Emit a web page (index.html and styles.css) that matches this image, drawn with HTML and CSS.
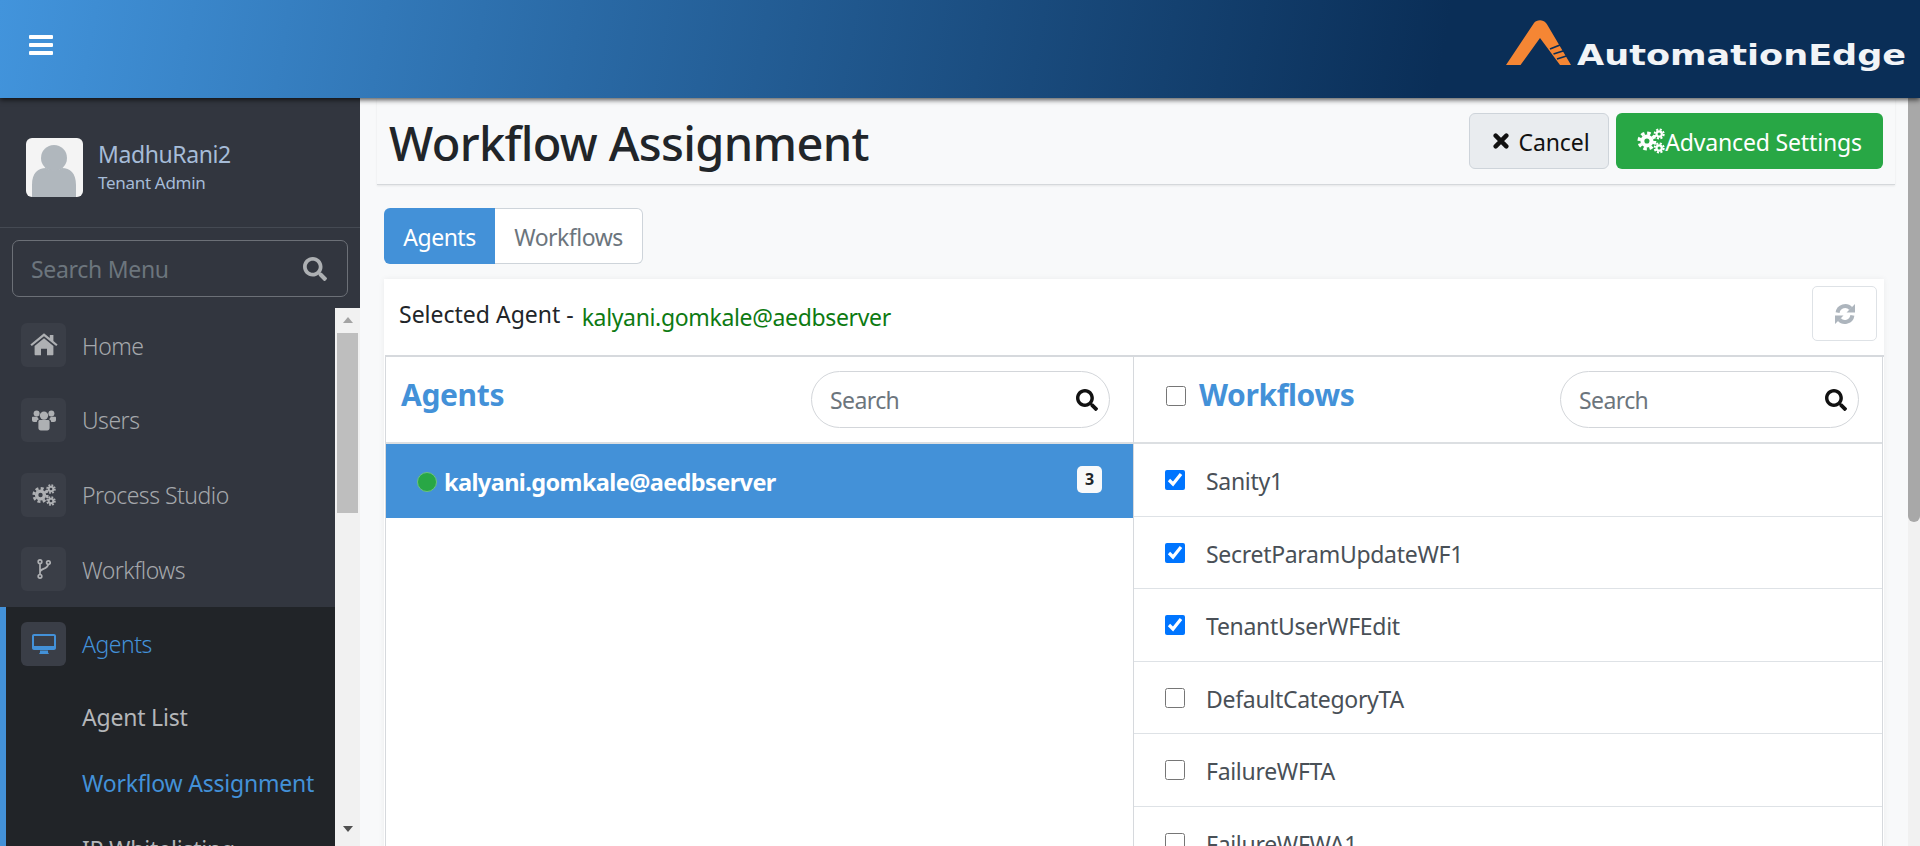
FILE: index.html
```html
<!DOCTYPE html>
<html lang="en">
<head>
  <meta charset="UTF-8">
  <title>Workflow Assignment</title>
  <link rel="stylesheet" href="styles.css">
</head>
<body>
  <svg class="defs" width="0" height="0">
    <symbol id="i-search" viewBox="0 0 512 512"><path d="M505 442.7L405.3 343c-4.5-4.5-10.6-7-17-7H372c27.6-35.3 44-79.7 44-128C416 93.1 322.9 0 208 0S0 93.1 0 208s93.1 208 208 208c48.3 0 92.7-16.4 128-44v16.3c0 6.4 2.5 12.5 7 17l99.7 99.7c9.4 9.4 24.6 9.4 33.9 0l28.3-28.3c9.4-9.4 9.4-24.6.1-34zM208 336c-70.7 0-128-57.2-128-128 0-70.7 57.2-128 128-128 70.7 0 128 57.2 128 128 0 70.7-57.2 128-128 128z"/></symbol>
    <symbol id="i-home" viewBox="0 0 28 24"><path d="M14 5.2 4.6 13v8.2c0 .6.4 1 1 1H11v-6.4h6v6.4h5.4c.6 0 1-.4 1-1V13zM27.6 11.4 23.4 8V2h-3.6v3L14 .3.4 11.4l1.4 1.7L14 3.2l12.2 9.9z"/></symbol>
    <symbol id="i-users" viewBox="0 0 24 22">
      <circle cx="12" cy="6.6" r="4.2"/><circle cx="4.6" cy="4.6" r="3"/><circle cx="19.4" cy="4.6" r="3"/>
      <path d="M6.4 12.4c0-.8.8-1.4 1.6-1.4h8c.8 0 1.6.6 1.6 1.4V19c0 1.4-1 2.4-2.4 2.4H8.800c-1.400 0-2.400-1-2.400-2.400zM0 8.800c0-.6.500-1 1-1h4.200c.4 1 1 1.800 1.700 2.400-1.300.5-2.100 1.500-2.100 2.800H2c-1.200 0-2-.8-2-2zM24 8.800c0-.6-.5-1-1-1h-4.200c-.4 1-1 1.800-1.700 2.400 1.300.5 2.100 1.500 2.100 2.800H22c1.200 0 2-.8 2-2z"/>
    </symbol>
    <symbol id="i-cogs" viewBox="0 0 24 22">
      <g fill="none" stroke="currentColor">
        <circle cx="8.500" cy="11" r="3.900" stroke-width="3.400"/>
        <circle cx="8.500" cy="11" r="6.700" stroke-width="2.800" stroke-dasharray="3 2.260"/>
        <circle cx="19" cy="5" r="2.300" stroke-width="1.900"/>
        <circle cx="19" cy="5" r="3.900" stroke-width="1.700" stroke-dasharray="1.800 1.260"/>
        <circle cx="19" cy="17" r="2.300" stroke-width="1.900"/>
        <circle cx="19" cy="17" r="3.900" stroke-width="1.700" stroke-dasharray="1.800 1.260"/>
      </g>
    </symbol>
    <symbol id="i-fork" viewBox="0 0 14 20">
      <g fill="none" stroke="currentColor" stroke-width="1.700">
        <circle cx="3" cy="2.700" r="1.800"/><circle cx="3" cy="17.300" r="1.800"/><circle cx="11.400" cy="3.600" r="1.800"/>
        <path d="M3 4.500v11M3 13c0-3.600 7.800-2.600 8.200-7.600"/>
      </g>
    </symbol>
    <symbol id="i-desktop" viewBox="0 0 24 20"><path d="M2 0h20c1.100 0 2 .9 2 2v12c0 1.100-.9 2-2 2H2c-1.100 0-2-.9-2-2V2C0 .9.900 0 2 0zm0 2v10h20V2zM8 16.500h8V18.500l1 1.500H7l1-1.500z" fill-rule="evenodd"/></symbol>
    <symbol id="i-times" viewBox="0 0 18 18"><path d="M3 3l12 12M15 3 3 15" fill="none" stroke="currentColor" stroke-width="5" stroke-linecap="round"/></symbol>
    <symbol id="i-refresh" viewBox="0 0 22 22">
      <path d="M3.600 9.600A7.600 7.600 0 0 1 16.800 5.600M18.400 12.400A7.600 7.600 0 0 1 5.200 16.400" fill="none" stroke="currentColor" stroke-width="4"/>
      <path d="M21 1v8.500h-8.500zM1 21v-8.500h8.500z"/>
    </symbol>
  </svg>

  <header class="topbar">
    <div class="menu-toggle"><span></span><span></span><span></span></div>
    <div class="logo">
      <svg class="logo-mark" width="65" height="45" viewBox="0 0 65 45">
        <path d="M0 45 28 3c2.500-3.500 9-4 12 0 .8 1 1.500 2 2 3l23 39H54L34 18 14.500 45z" fill="#f58634"/>
        <path d="M44 29l10-4M47.500 34l11-3.500M51 39l11-3.500" stroke="#0a2e57" stroke-width="1.800"/>
      </svg>
      <span class="logo-text">AutomationEdge</span>
    </div>
  </header>

  <div class="layout">
    <aside class="sidebar">
      <div class="user">
        <div class="avatar">
          <svg width="57" height="59" viewBox="0 0 57 59">
            <circle cx="28" cy="20" r="13" fill="#b0b7bd"/>
            <path d="M6 59V47c0-12 6-17 14-17 4 3 12 3 16 0 8 0 14 5 14 17v12z" fill="#b0b7bd"/>
          </svg>
        </div>
        <div>
          <div class="user-name">MadhuRani2</div>
          <div class="user-role">Tenant Admin</div>
        </div>
      </div>
      <div class="menu-search">
        <span>Search Menu</span>
        <svg class="menu-search-icon"><use href="#i-search"/></svg>
      </div>
      <div class="nav-wrap">
        <ul class="nav">
          <li class="nav-item"><span class="nav-icon"><svg width="28" height="24"><use href="#i-home"/></svg></span><span class="nav-label">Home</span></li>
          <li class="nav-item"><span class="nav-icon"><svg width="24" height="22"><use href="#i-users"/></svg></span><span class="nav-label">Users</span></li>
          <li class="nav-item"><span class="nav-icon"><svg width="24" height="22"><use href="#i-cogs"/></svg></span><span class="nav-label">Process Studio</span></li>
          <li class="nav-item"><span class="nav-icon"><svg width="14" height="20"><use href="#i-fork"/></svg></span><span class="nav-label">Workflows</span></li>
          <li class="nav-group">
            <div class="nav-item active"><span class="nav-icon"><svg width="24" height="20"><use href="#i-desktop"/></svg></span><span class="nav-label">Agents</span></div>
            <div class="sub-item">Agent List</div>
            <div class="sub-item current">Workflow Assignment</div>
            <div class="sub-item">IP Whitelisting</div>
          </li>
        </ul>
        <div class="nav-scroll">
          <span class="arrow-up"></span>
          <span class="nav-thumb"></span>
          <span class="arrow-down"></span>
        </div>
      </div>
    </aside>

    <main class="main">
      <div class="page-head">
        <h1>Workflow Assignment</h1>
        <div class="actions">
          <button class="btn btn-cancel"><svg width="16" height="16"><use href="#i-times"/></svg><span class="btn-label">Cancel</span></button>
          <button class="btn btn-green"><svg width="28" height="26"><use href="#i-cogs"/></svg><span class="btn-label">Advanced Settings</span></button>
        </div>
      </div>

      <div class="tabs">
        <div class="tab on">Agents</div>
        <div class="tab">Workflows</div>
      </div>

      <section class="card">
        <div class="card-top">
          <span class="selected">Selected Agent -</span>
          <span class="selected-name">kalyani.gomkale@aedbserver</span>
          <button class="refresh"><svg width="22" height="22"><use href="#i-refresh"/></svg></button>
        </div>
        <div class="panels">
          <div class="panel">
            <div class="panel-head">
              <h2>Agents</h2>
              <div class="pill"><span>Search</span><svg><use href="#i-search"/></svg></div>
            </div>
            <div class="agent-row">
              <span class="dot"></span>
              <span class="agent-name">kalyani.gomkale@aedbserver</span>
              <span class="badge">3</span>
            </div>
          </div>
          <div class="panel">
            <div class="panel-head">
              <input type="checkbox" class="check head-check">
              <h2>Workflows</h2>
              <div class="pill"><span>Search</span><svg><use href="#i-search"/></svg></div>
            </div>
            <div class="wf-row"><input type="checkbox" class="check" checked><span class="wf-name">Sanity1</span></div>
            <div class="wf-row"><input type="checkbox" class="check" checked><span class="wf-name">SecretParamUpdateWF1</span></div>
            <div class="wf-row"><input type="checkbox" class="check" checked><span class="wf-name">TenantUserWFEdit</span></div>
            <div class="wf-row"><input type="checkbox" class="check"><span class="wf-name">DefaultCategoryTA</span></div>
            <div class="wf-row"><input type="checkbox" class="check"><span class="wf-name">FailureWFTA</span></div>
            <div class="wf-row"><input type="checkbox" class="check"><span class="wf-name">FailureWFWA1</span></div>
          </div>
        </div>
      </section>
    </main>

    <div class="page-scroll"><span class="page-thumb"></span></div>
  </div>
</body>
</html>
```

FILE: styles.css
```css
* {
  box-sizing: border-box;
}

html, body {
  margin: 0;
  height: 846px;
  overflow: hidden;
}

body {
  font-family: "Noto Sans", "Open Sans", sans-serif;
  background-color: #f8f9fa;
  color: #212529;
  display: flex;
  flex-direction: column;
}

svg {
  fill: currentColor;
  display: block;
}

.defs {
  position: absolute;
}

/* top bar */
.topbar {
  height: 98px;
  flex: none;
  display: flex;
  align-items: center;
  justify-content: space-between;
  padding: 0 16px 0 29px;
  background: linear-gradient(100deg, #4294dc 0%, #2a6aa6 30%, #0a2e57 75%, #0a2e57 100%);
  box-shadow: 0 2px 5px rgba(0, 0, 0, 0.65);
  position: relative;
  z-index: 5;
}

.menu-toggle {
  display: flex;
  flex-direction: column;
  gap: 4px;
  margin-top: -8px;
}

.menu-toggle span {
  display: block;
  width: 24px;
  height: 4px;
  border-radius: 1px;
  background-color: white;
}

.logo {
  align-self: flex-start;
  display: flex;
  align-items: flex-start;
  gap: 6px;
  padding-top: 20px;
}

.logo-text {
  width: 327px;
  margin-top: 20px;
  font-family: "DejaVu Sans", sans-serif;
  font-size: 29px;
  font-weight: 700;
  line-height: 30px;
  white-space: nowrap;
  color: #f2f4f7;
  transform: scaleX(1.21);
  transform-origin: left;
}

.layout {
  flex: 1;
  display: flex;
  min-height: 0;
}

/* sidebar */
.sidebar {
  width: 360px;
  flex: none;
  display: flex;
  flex-direction: column;
  background-color: #32363f;
}

.user {
  height: 130px;
  flex: none;
  display: flex;
  align-items: center;
  gap: 15px;
  padding: 10px 0 0 26px;
  border-bottom: 1px solid #454a53;
}

.avatar {
  width: 57px;
  height: 59px;
  border-radius: 6px;
  overflow: hidden;
  background-color: #f4f4f4;
}

.user-name {
  font-size: 23px;
  line-height: 29px;
  letter-spacing: -0.4px;
  color: #a6bcd8;
}

.user-role {
  font-size: 17px;
  line-height: 27px;
  letter-spacing: -0.3px;
  color: #a6bcd8;
}

.menu-search {
  flex: none;
  height: 57px;
  margin: 12px 12px 11px;
  padding: 0 20px 0 18px;
  display: flex;
  align-items: center;
  justify-content: space-between;
  border: 1px solid #6c7077;
  border-radius: 7px;
  font-size: 23px;
  letter-spacing: -0.3px;
  color: #6c757d;
}

.menu-search-icon {
  width: 24px;
  height: 24px;
  color: #adb0b3;
}

.nav-wrap {
  flex: 1;
  display: flex;
  min-height: 0;
}

.nav {
  flex: 1;
  margin: 0;
  padding: 0;
  list-style: none;
  overflow: hidden;
}

.nav-item {
  height: 74.670px;
  display: flex;
  align-items: center;
  gap: 16px;
  padding-left: 21px;
  font-size: 23px;
  font-weight: 300;
  letter-spacing: -0.5px;
  color: #a5a8ac;
}

.nav-label {
  margin-top: 1px;
}

.nav-icon {
  width: 45px;
  height: 44px;
  display: flex;
  align-items: center;
  justify-content: center;
  border-radius: 6px;
  background-color: #3a3e47;
  color: #aeb0b3;
}

.nav-group {
  background-color: #212428;
  border-left: 6px solid #4391d8;
  padding-bottom: 20px;
}

.nav-group .nav-item {
  padding-left: 15px;
}

.nav-item.active {
  color: #4391d8;
}

.nav-item.active .nav-icon {
  color: #4391d8;
}

.sub-item {
  height: 66px;
  display: flex;
  align-items: center;
  padding-left: 76px;
  font-size: 23px;
  letter-spacing: -0.2px;
  color: #b4b6b9;
}

.nav-item + .sub-item {
  margin-top: 3px;
}

.sub-item.current {
  color: #4391d8;
}

.nav-scroll {
  width: 25px;
  flex: none;
  display: flex;
  flex-direction: column;
  align-items: center;
  background-color: #f1f1f1;
}

.arrow-up, .arrow-down {
  width: 0;
  height: 0;
  border-left: 5px solid transparent;
  border-right: 5px solid transparent;
}

.arrow-up {
  margin-top: 9px;
  border-bottom: 6px solid #a3a3a3;
}

.nav-thumb {
  width: 21px;
  height: 180px;
  margin-top: 10px;
  background-color: #bebebe;
}

.arrow-down {
  margin-top: 313px;
  border-top: 6px solid #505050;
}

/* main */
.main {
  flex: 1;
  min-width: 0;
  display: flex;
  flex-direction: column;
  overflow: hidden;
  padding-left: 17px;
}

.page-head {
  height: 87px;
  flex: none;
  display: flex;
  align-items: center;
  justify-content: space-between;
  margin-right: 13px;
  padding: 0 12px 0 11px;
  border-bottom: 1px solid #d5d8db;
  box-shadow: 0 1px 2px rgba(0, 0, 0, 0.08);
}

h1 {
  margin: 4px 0 0 1px;
  font-size: 47px;
  font-weight: 500;
  line-height: 56px;
  letter-spacing: -0.65px;
  color: #212529;
}

.actions {
  display: flex;
  gap: 7px;
}

.btn {
  height: 56px;
  display: flex;
  align-items: center;
  justify-content: center;
  border-radius: 6px;
  font-family: inherit;
  font-size: 23px;
  letter-spacing: -0.15px;
  border: 1px solid transparent;
}

.btn-label {
  margin-top: 2px;
}

.btn-cancel {
  width: 140px;
  gap: 10px;
  padding-left: 10px;
  letter-spacing: -0.1px;
  background-color: #e9ecef;
  border-color: #ced4da;
  color: #111;
}

.btn-green {
  width: 267px;
  background-color: #28a745;
  color: white;
}

.tabs {
  display: flex;
  flex: none;
  width: 259px;
  height: 56px;
  margin: 23px 0 15px 7px;
}

.tab {
  display: flex;
  align-items: center;
  justify-content: center;
  flex: 1;
  padding-top: 2px;
  font-size: 23px;
  letter-spacing: -0.5px;
  color: #6c757d;
  background-color: white;
  border: 1px solid #ced4da;
  border-left: none;
  border-radius: 0 6px 6px 0;
}

.tab.on {
  flex: none;
  width: 111px;
  color: white;
  background-color: #4391d8;
  border: none;
  border-radius: 6px 0 0 6px;
}

.card {
  flex: 1;
  margin: 0 24px 0 7px;
  background-color: white;
  box-shadow: 0 0 6px rgba(0, 0, 0, 0.06);
}

.card-top {
  height: 76px;
  display: flex;
  align-items: flex-start;
  padding: 18px 7px 0 15px;
}

.selected {
  font-size: 23px;
  line-height: 34px;
  color: #212529;
}

.selected-name {
  font-size: 23px;
  line-height: 34px;
  letter-spacing: -0.35px;
  margin: 3px 0 0 8px;
  color: #0d7a12;
}

.refresh {
  width: 65px;
  height: 55px;
  margin: -11px 0 0 auto;
  display: flex;
  align-items: center;
  justify-content: center;
  background-color: white;
  border: 1px solid #dee2e6;
  border-radius: 5px;
  color: #adb5bd;
}

.panels {
  display: flex;
  border-top: 2px solid #d6d9dd;
  margin-left: 1px;
}

.panel {
  width: 749px;
  flex: none;
  border-left: 1px solid #d6d9dd;
  border-right: 1px solid #d6d9dd;
}

.panel + .panel {
  width: 749px;
  border-left: none;
}

.panel-head {
  height: 87px;
  display: flex;
  align-items: flex-start;
  padding: 14px 23px 0 15px;
  border-bottom: 2px solid #dcdfe2;
}

.panel + .panel .panel-head {
  padding-left: 40px;
}

h2 {
  margin: 6px 0 0;
  font-size: 30px;
  font-weight: 700;
  line-height: 36px;
  letter-spacing: -0.35px;
  color: #4391d8;
}

.pill {
  width: 299px;
  height: 57px;
  margin-left: auto;
  display: flex;
  align-items: center;
  justify-content: space-between;
  padding: 0 11px 0 18px;
  border: 1px solid #d3d6da;
  border-radius: 29px;
  font-size: 23px;
  letter-spacing: -0.6px;
  color: #6c757d;
}

.pill svg {
  width: 22px;
  height: 22px;
  color: #111;
}

.agent-row {
  height: 74px;
  display: flex;
  align-items: center;
  padding: 0 31px 0 31px;
  background-color: #4391d8;
  color: white;
}

.dot {
  width: 20px;
  height: 20px;
  margin-top: 2px;
  border-radius: 50%;
  background-color: #28a745;
  border: 1px solid #6cc27f;
}

.agent-name {
  margin: 2px 0 0 7px;
  font-size: 23.500px;
  font-weight: 700;
  letter-spacing: -0.6px;
}

.badge {
  width: 25px;
  height: 27px;
  margin: -4px 0 0 auto;
  display: flex;
  align-items: center;
  justify-content: center;
  border-radius: 5px;
  background-color: #f8f9fa;
  color: #212529;
  font-size: 16px;
  font-weight: 700;
}

.wf-row {
  height: 72.500px;
  display: flex;
  align-items: center;
  padding-left: 31px;
  border-bottom: 1px solid #dee2e6;
  font-size: 23px;
  letter-spacing: -0.3px;
  color: #495057;
}

.wf-name {
  margin-top: 3px;
}

.check {
  width: 20px;
  height: 20px;
  margin: 1px 21px 0 0;
  flex: none;
}

.head-check {
  margin: 15px 13px 0 -8px;
}

.page-scroll {
  width: 12px;
  flex: none;
  background-color: #f1f1f1;
}

.page-thumb {
  display: block;
  height: 424px;
  background-color: #a8a8a8;
  border-radius: 0 0 6px 6px;
}
```
